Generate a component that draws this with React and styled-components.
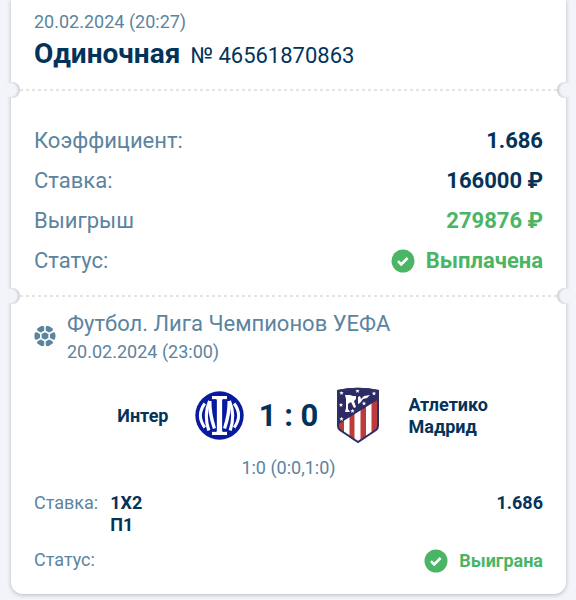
import React from "react";
import styled, { createGlobalStyle } from "styled-components";

const colors = {
  page: "#f3f4f9",
  navy: "#04335a",
  muted: "#5b849e",
  green: "#4bb566",
};

const GlobalStyle = createGlobalStyle`
  *, *::before, *::after { box-sizing: border-box; }
  body {
    margin: 0;
    background: ${colors.page};
    color: ${colors.navy};
    font-family: Roboto, "Liberation Sans", sans-serif;
  }
  h1, h2, p, dl, dd { margin: 0; }
`;

const Page = styled.main`
  padding: 0 10px 5px 11px;
  overflow: hidden;
`;

const Ticket = styled.article`
  background: #fff;
  border-radius: 0 0 12px 12px;
  box-shadow: 0 1px 4px rgba(70, 75, 95, 0.35);
`;

const Header = styled.header`
  padding: 10px 23px 5px;
`;

const DateLine = styled.p`
  color: ${colors.muted};
  font-size: 18px;
  line-height: 24px;
`;

const TitleLine = styled.div`
  display: flex;
  align-items: baseline;
  gap: 10px;
  line-height: 40px;
`;

const Title = styled.h1`
  font-size: 28px;
  font-weight: 700;
`;

const TicketNumber = styled.span`
  font-size: 22px;
`;

const Tear = styled.div`
  position: relative;
  height: 18px;
  display: flex;
  align-items: center;
  padding: 0 9px;
`;

const TearLine = styled.div`
  flex: 1;
  height: 2px;
  background: repeating-linear-gradient(90deg, #e2e5e6 0 3px, transparent 3px 6px);
`;

const NotchClip = styled.span`
  position: absolute;
  top: 0;
  ${(p) => (p.$side === "left" ? "left: -4px;" : "right: -4px;")}
  width: 14px;
  height: 18px;
  overflow: hidden;

  &::before {
    content: "";
    position: absolute;
    top: 1px;
    ${(p) => (p.$side === "left" ? "right: 1px;" : "left: 1px;")}
    width: 16px;
    height: 16px;
    border-radius: 50%;
    background: ${colors.page};
    box-shadow: inset ${(p) => (p.$side === "left" ? "-2px" : "2px")} 0 2px #cfd0d6;
  }
`;

const Summary = styled.dl`
  padding: 22px 23px 6px;
`;

const SummaryRow = styled.div`
  display: flex;
  justify-content: space-between;
  align-items: center;
  min-height: 40px;
  font-size: 22px;
  line-height: 40px;

  dt { color: ${colors.muted}; }
`;

const Value = styled.dd`
  display: flex;
  align-items: center;
  gap: 12px;
  color: ${(p) => (p.$won ? colors.green : colors.navy)};
  font-weight: 700;
`;

const Event = styled.section`
  padding: 3px 23px 21px;
`;

const EventHeader = styled.header`
  display: flex;
  align-items: center;
  gap: 11px;
`;

const EventTitle = styled.h2`
  color: ${colors.muted};
  font-size: 22px;
  font-weight: 400;
  line-height: 32px;
`;

const Match = styled.div`
  display: grid;
  grid-template-columns: 1fr 50px 60px 50px 1fr;
  align-items: center;
  column-gap: 14px;
  margin-top: 21px;
  height: 62px;
`;

const Team = styled.p`
  font-size: 18px;
  font-weight: 700;
  line-height: 22px;
  text-align: ${(p) => (p.$home ? "right" : "left")};
  padding: ${(p) => (p.$home ? "0 12px 0 0" : "0 0 0 12px")};
`;

const Score = styled.p`
  font-size: 31px;
  font-weight: 700;
  line-height: 40px;
  text-align: center;
  white-space: nowrap;
`;

const Periods = styled.p`
  margin-top: 9px;
  color: ${colors.muted};
  font-size: 18px;
  line-height: 24px;
  text-align: center;
`;

const BetDetails = styled.dl`
  margin-top: 12px;
`;

const BetRow = styled.div`
  display: flex;
  align-items: flex-start;
  gap: 12px;
  margin-bottom: 13px;
  font-size: 18px;
  line-height: 22px;

  &:last-child { margin-bottom: 0; }

  dt { color: ${colors.muted}; }
  dd { font-weight: 700; }
  dd:last-child { margin-left: auto; }
`;

const StatusValue = styled(Value)`
  gap: 11px;
`;

function CheckIcon() {
  return (
    <svg width="24" height="24" viewBox="0 0 24 24" aria-hidden="true">
      <circle cx="12" cy="12" r="11.5" fill={colors.green} />
      <path d="M7 12.2l3.2 3.2 6.4-6.4" fill="none" stroke="#fff" strokeWidth="2.6" />
    </svg>
  );
}

const spokes = [0, 60, 120, 180, 240, 300];

function BallIcon() {
  return (
    <svg width="22" height="22" viewBox="0 0 22 22" aria-hidden="true">
      <circle cx="11" cy="11" r="10.6" fill={colors.muted} />
      <path
        d="M11 6.2l4.2 2.4v4.8L11 15.8l-4.2-2.400V8.600z"
        fill="none"
        stroke="#fff"
        strokeWidth="1.7"
      />
      {spokes.map((angle) => (
        <g key={angle} transform={`rotate(${angle} 11 11)`}>
          <path d="M11 6V2" stroke="#fff" strokeWidth="1.5" />
          <path d="M8.4 0h5.200L11 2.800z" fill="#fff" />
        </g>
      ))}
    </svg>
  );
}

function InterLogo() {
  return (
    <svg width="50" height="50" viewBox="0 0 50 50" role="img" aria-label="Интер">
      <circle cx="24.5" cy="24.5" r="24.2" fill="#071aa0" />
      <g fill="none" stroke="#fff">
        <path d="M9.8 12.5Q1 24.5 9.8 36.5" strokeWidth="3" />
        <path d="M39.2 12.5Q48 24.5 39.2 36.5" strokeWidth="3" />
        <path d="M14.6 10Q8.500 24 13.800 39.500" strokeWidth="3.200" />
        <path d="M34.400 10Q40.500 24 35.200 39.500" strokeWidth="3.200" />
        <path d="M14.800 10Q14.500 23 19.500 37.500" strokeWidth="3.400" />
        <path d="M34.200 10Q34.500 23 29.500 37.500" strokeWidth="3.400" />
      </g>
      <path
        d="M16.500 4.500h16v4.200h-4.800v31.600h4.800v4.200h-16v-4.200h4.800V8.700h-4.800z"
        fill="#fff"
        stroke="#071aa0"
        strokeWidth="1"
      />
    </svg>
  );
}

const stars = [
  [4.5, 6], [20.5, 4], [37, 6.5], [4, 18], [27, 16.5], [15.5, 24], [4.5, 32],
];

function AtleticoLogo() {
  return (
    <svg width="50" height="58" viewBox="-4 0 50 58" role="img" aria-label="Атлетико Мадрид">
      <defs>
        <clipPath id="shield">
          <path d="M0 3Q21-1.500 42 3v36q0 3-2.500 4.500L21 56 2.500 43.500Q0 42 0 39z" />
        </clipPath>
      </defs>
      <g clipPath="url(#shield)">
        <path d="M0-2h42v60H0z" fill="#fff" />
        <path d="M2 20h5v36H2zM12.500 20h5v36h-5zM23.500 12h5.500v44h-5.500zM34.500 5h5.500v51h-5.500z" fill="#bd3b3b" />
        <path d="M0-2h42v14L0 38z" fill="#2c2b63" />
        <path d="M8 8h5l3 1h3v3l-2 2 2 6-2 1-3-6-3 2v5l2 3H8l1-4V12zM21 10l2-1 1 3 3-3 6-1-3 3-4 1-3 4-2 1z" fill="#fff" />
        {stars.map(([x, y]) => (
          <path
            key={`${x}-${y}`}
            transform={`translate(${x} ${y})`}
            d="M0-2.200L.6-.7 2.200-.7.9.4 1.400 2 0 1-1.400 2-.9.4-2.200-.7-.6-.7z"
            fill="#fff"
          />
        ))}
      </g>
      <path
        d="M1 4Q21-.500 41 4v35q0 2.500-2 4L21 55 3 43q-2-1.500-2-4z"
        fill="none"
        stroke="#302f65"
        strokeWidth="2"
      />
    </svg>
  );
}

function TearOff() {
  return (
    <Tear>
      <NotchClip $side="left" />
      <TearLine />
      <NotchClip $side="right" />
    </Tear>
  );
}

export default function App() {
  return (
    <>
      <GlobalStyle />
      <Page>
        <Ticket>
          <Header>
            <DateLine>20.02.2024 (20:27)</DateLine>
            <TitleLine>
              <Title>Одиночная</Title>
              <TicketNumber>№ 46561870863</TicketNumber>
            </TitleLine>
          </Header>

          <TearOff />

          <Summary>
            <SummaryRow>
              <dt>Коэффициент:</dt>
              <Value>1.686</Value>
            </SummaryRow>
            <SummaryRow>
              <dt>Ставка:</dt>
              <Value>166000 ₽</Value>
            </SummaryRow>
            <SummaryRow>
              <dt>Выигрыш</dt>
              <Value $won>279876 ₽</Value>
            </SummaryRow>
            <SummaryRow>
              <dt>Статус:</dt>
              <StatusValue $won>
                <CheckIcon />
                Выплачена
              </StatusValue>
            </SummaryRow>
          </Summary>

          <TearOff />

          <Event>
            <EventHeader>
              <BallIcon />
              <div>
                <EventTitle>Футбол. Лига Чемпионов УЕФА</EventTitle>
                <DateLine>20.02.2024 (23:00)</DateLine>
              </div>
            </EventHeader>

            <Match>
              <Team $home>Интер</Team>
              <InterLogo />
              <Score>1 : 0</Score>
              <AtleticoLogo />
              <Team>Атлетико Мадрид</Team>
            </Match>
            <Periods>1:0 (0:0,1:0)</Periods>

            <BetDetails>
              <BetRow>
                <dt>Ставка:</dt>
                <dd>
                  1X2
                  <br />
                  П1
                </dd>
                <dd>1.686</dd>
              </BetRow>
              <BetRow>
                <dt>Статус:</dt>
                <StatusValue $won>
                  <CheckIcon />
                  Выиграна
                </StatusValue>
              </BetRow>
            </BetDetails>
          </Event>
        </Ticket>
      </Page>
    </>
  );
}
